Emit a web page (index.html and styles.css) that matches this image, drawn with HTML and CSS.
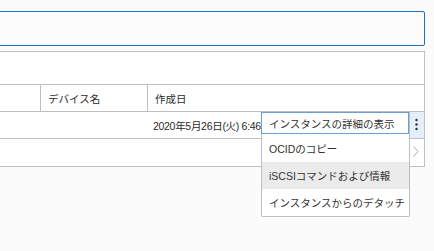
FILE: index.html
```html
<!DOCTYPE html>
<html lang="ja">
<head>
  <meta charset="UTF-8" />
  <title>アタッチされたブロック・ボリューム</title>
  <link rel="stylesheet" href="styles.css">
</head>
<body>

  <div class="page">
    <div class="search"></div>

    <div class="table">
      <div class="toolbar"></div>

      <div class="row head">
        <div class="cell"></div>
        <div class="cell">デバイス名</div>
        <div class="cell">作成日</div>
        <div class="cell"></div>
      </div>

      <div class="row">
        <div class="cell"></div>
        <div class="cell nodiv"></div>
        <div class="cell nodiv date">2020年5月26日(火) 6:46</div>
        <div class="cell kebab">
          <svg width="14" height="26" viewBox="0 0 14 26">
            <circle cx="6.5" cy="8" r="1.2" fill="#333" />
            <circle cx="6.5" cy="12.5" r="1.2" fill="#333" />
            <circle cx="6.5" cy="17" r="1.2" fill="#333" />
          </svg>
        </div>
      </div>

      <div class="row last">
        <div class="cell"></div>
        <div class="cell nodiv"></div>
        <div class="cell nodiv"></div>
        <div class="cell expand">
          <svg width="14" height="27" viewBox="0 0 14 27">
            <path d="M3.5 7.5 L8 12.5 L3.5 17.5" fill="none" stroke="#aaa" stroke-width="1" />
          </svg>
        </div>
      </div>
    </div>

    <!-- row action menu, open over the table -->
    <div class="menu">
      <div class="item focus">インスタンスの詳細の表示</div>
      <div class="item">OCIDのコピー</div>
      <div class="item hover">iSCSIコマンドおよび情報</div>
      <div class="item">インスタンスからのデタッチ</div>
    </div>
  </div>

</body>
</html>
```

FILE: styles.css
```css
html, body {
  height: 100%;
}

body {
  margin: 0;
  min-height: 251px;
  background: #fbfbfb;
  font-family: "Liberation Sans", "Noto Sans CJK JP", sans-serif;
  font-size: 10.5px;
  color: #2b2b2b;
}

.page {
  position: relative;
  margin: 0 9px 0 -10px;
  padding-top: 11px;
  min-height: 240px;
}

.search {
  height: 33px;
  border: 1px solid #1f6fc5;
  border-radius: 2px;
  background: #fcfcfc;
}

.table {
  margin-top: 5px;
  border: 1px solid #bcc0c6;
  background: #fff;
}

.toolbar {
  height: 32px;
}

.row {
  display: grid;
  grid-template-columns: 49px 107px 263px 14px;
  height: 26px;
  border-top: 1px solid #bcc0c6;
}

.row.last {
  height: 27px;
}

.cell {
  display: flex;
  align-items: center;
  padding: 0 7px;
  white-space: nowrap;
}

.head .cell + .cell {
  border-left: 1px solid #bcc0c6;
}

.head .cell:last-child {
  border-left: none;
}

.date {
  padding-left: 6px;
  letter-spacing: -0.3px;
}

.kebab, .expand {
  padding: 0;
}

.kebab {
  background: #e4effa;
}

.menu {
  position: absolute;
  top: 112px;
  right: 15px;
  width: 147px;
  background: #fff;
  border: 1px solid #bcc0c6;
  border-top: none;
  border-radius: 0 0 2px 2px;
  z-index: 2;
}

.item {
  height: 27px;
  display: flex;
  align-items: center;
  padding: 0 0 0 7px;
  white-space: nowrap;
  color: #333;
}

.item.focus {
  height: 20px;
  margin-left: -1px;
  border: 1px solid #6aa0da;
}

.item:nth-child(2) {
  height: 28px;
}

.item.hover {
  background: #ebebeb;
}
```
